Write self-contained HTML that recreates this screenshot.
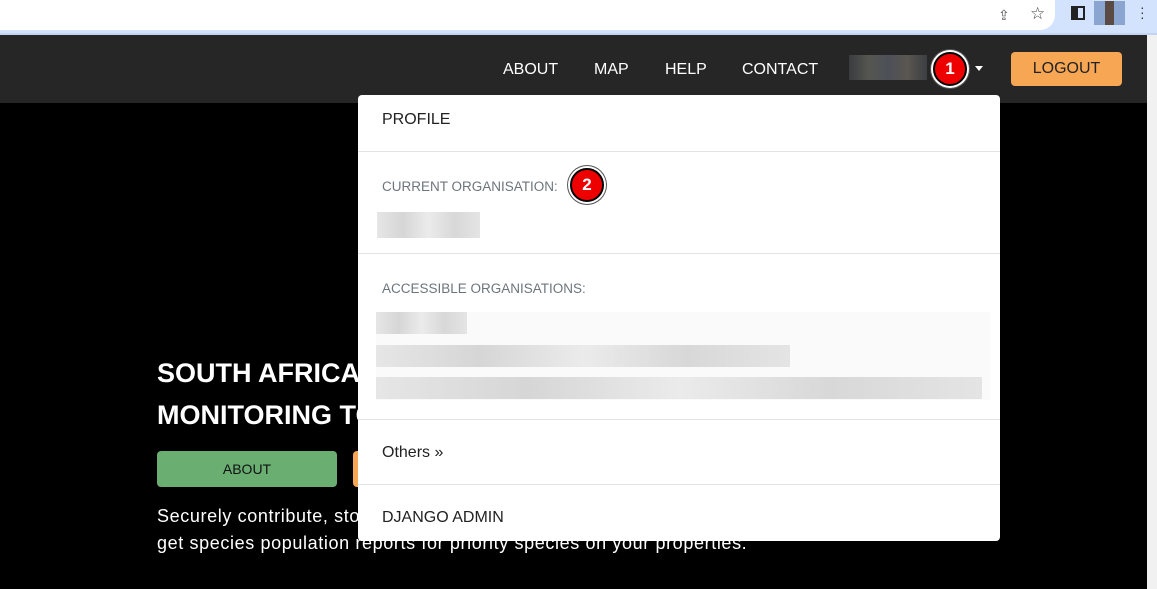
<!DOCTYPE html>
<html><head><style>
*{margin:0;padding:0;box-sizing:border-box}
body{width:1157px;height:589px;overflow:hidden;background:#000;font-family:"Liberation Sans",sans-serif;position:relative}
.chrome{position:absolute;left:0;top:0;width:1157px;height:35px;background:#d3e3fd;border-bottom:2px solid #c4d4ee}
.omni{position:absolute;left:0;top:0;width:1055px;height:30px;background:#fff;border-radius:0 0 15px 0}
.nav{position:absolute;left:0;top:35px;width:1147px;height:68px;background:#262626}
.nl{position:absolute;top:61px;color:#fff;font-size:16px}
.sb{position:absolute;left:1147px;top:35px;width:10px;height:554px;background:#f1f1f1}
.badge{position:absolute;width:34px;height:34px;border-radius:50%;background:#e00;border:2px solid #000;box-shadow:0 0 0 2px #fff,0 0 0 3px #555;color:#fff;font-weight:bold;font-size:17px;text-align:center;line-height:30px}
.dd{position:absolute;left:358px;top:95px;width:642px;height:446px;background:#fff;border-radius:4px}
.hr{position:absolute;left:0;width:642px;height:1px;background:#e3e3e3}
.dt{position:absolute;left:24px;font-size:16px;color:#222}
.lab{position:absolute;left:24px;font-size:13.5px;color:#6c757d}
.blur{position:absolute;background:linear-gradient(90deg,#e6e6e6,#d6d6d6,#ebebeb,#d8d8d8,#e4e4e4)}
</style></head><body>
<div class="chrome"><div class="omni"></div>
<div style="position:absolute;left:998px;top:7px;color:#555;font-size:14px">⇪</div>
<div style="position:absolute;left:1030px;top:4px;color:#444;font-size:17px">☆</div>
<div style="position:absolute;left:1071px;top:6px;width:14px;height:14px;border:2px solid #222;border-left-width:7px"></div>
<div style="position:absolute;left:1094px;top:1px;width:31px;height:24px;background:linear-gradient(90deg,#8aa5d0 0 35%,#5a4a44 35% 65%,#8aa5d0 65%)"></div>
<div style="position:absolute;left:1140px;top:5px;color:#333;font-size:14px;line-height:5px">·<br>·<br>·</div>
</div>
<div class="nav"></div>
<div class="sb"></div>
<div class="nl" style="left:503px">ABOUT</div>
<div class="nl" style="left:594px">MAP</div>
<div class="nl" style="left:665px">HELP</div>
<div class="nl" style="left:742px">CONTACT</div>
<div style="position:absolute;left:849px;top:55px;width:78px;height:25px;background:linear-gradient(90deg,#3a3c40,#555650,#4d5058,#5a5650,#3c3e42)"></div>
<div class="badge" style="left:933px;top:52px">1</div>
<div style="position:absolute;left:975px;top:66px;border:4px solid transparent;border-top:5px solid #fff"></div>
<div style="position:absolute;left:1011px;top:52px;width:111px;height:34px;background:#f7a654;border-radius:4px;color:#222;font-size:16px;text-align:center;line-height:34px">LOGOUT</div>
<div style="position:absolute;left:157px;top:352px;color:#fff;font-weight:bold;font-size:27px;line-height:42px">SOUTH AFRICAN<br>MONITORING TOOL</div>
<div style="position:absolute;left:157px;top:451px;width:180px;height:36px;background:#6aae72;border-radius:4px;color:#111;font-size:14px;text-align:center;line-height:36px">ABOUT</div>
<div style="position:absolute;left:353px;top:451px;width:20px;height:36px;background:#f7a654;border-radius:4px"></div>
<div style="position:absolute;left:157px;top:503px;color:#fff;font-size:18px;letter-spacing:0.62px;line-height:27px;white-space:nowrap">Securely contribute, store and analyse species population data and<br>get species population reports for priority species on your properties.</div>
<div class="dd">
<div class="dt" style="top:16px">PROFILE</div>
<div class="hr" style="top:56px"></div>
<div class="lab" style="top:84px">CURRENT ORGANISATION:</div>
<div class="badge" style="left:212px;top:73px;width:34px;height:34px">2</div>
<div class="blur" style="left:19px;top:117px;width:103px;height:26px"></div>
<div class="hr" style="top:158px"></div>
<div class="lab" style="top:186px">ACCESSIBLE ORGANISATIONS:</div>
<div style="position:absolute;left:18px;top:217px;width:614px;height:88px;background:#fafafa;z-index:0"></div>
<div class="blur" style="left:18px;top:217px;width:91px;height:22px;z-index:1"></div>
<div class="blur" style="left:18px;top:250px;width:414px;height:22px;z-index:1"></div>
<div class="blur" style="left:18px;top:282px;width:606px;height:22px;z-index:1"></div>
<div class="hr" style="top:324px"></div>
<div class="dt" style="top:349px">Others »</div>
<div class="hr" style="top:389px"></div>
<div class="dt" style="top:414px">DJANGO ADMIN</div>
</div>
</body></html>
